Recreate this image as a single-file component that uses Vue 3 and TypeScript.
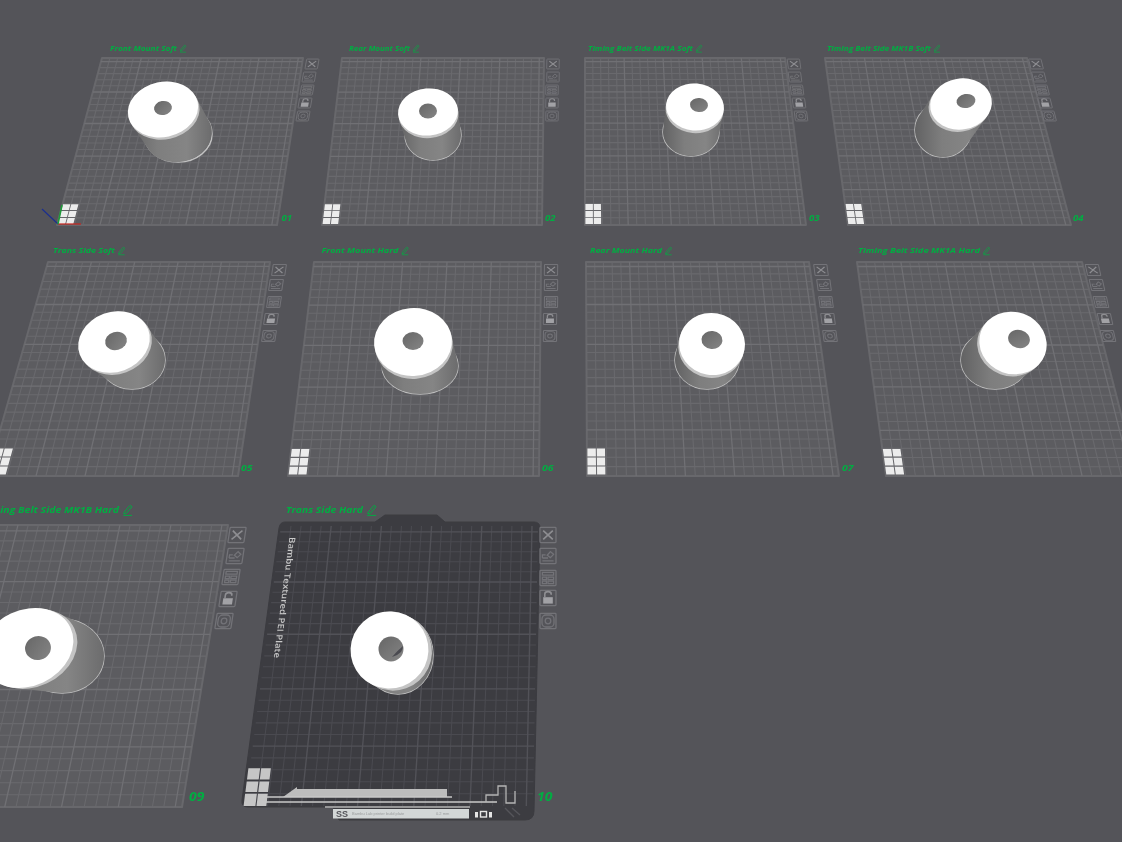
<script setup lang="ts">
type P = [number, number]
type E = [number, number, number, number, number]
interface PlateIn {
  q: [P, P, P, P]
  label: string
  lx: number
  lw: number
  ly: number
  fs: number
  num: string
  nx: number
  ny: number
  icons: P[]
  is: number
  isx: number
  t: E
  b: E
  h: E
  logo: boolean
  dark?: boolean
}

const plates: PlateIn[] = [
  { q: [[102, 58], [303, 58], [277, 225], [57, 225]], label: 'Front Mount Soft', lx: 110, lw: 67, ly: 50.5, fs: 6.6, num: '01', nx: 281.5, ny: 221, icons: [[312, 64], [309, 77], [307, 90], [305, 103], [303, 116]], is: 0.52, isx: 0.62, t: [163, 109.5, 35.5, 27.5, -12], b: [178, 134, 34, 28, -10], h: [163, 108, 9, 7, -10], logo: true },
  { q: [[342, 58], [544, 58], [542, 225], [322, 225]], label: 'Rear Mount Soft', lx: 349, lw: 61, ly: 50.5, fs: 6.6, num: '02', nx: 545, ny: 221, icons: [[553, 64], [553, 77], [552, 90], [552, 103], [552, 116]], is: 0.52, isx: 0.62, t: [428, 112, 30, 23.5, -5], b: [433, 135, 28, 25, 0], h: [428, 111, 9, 7.5, 0], logo: true },
  { q: [[585, 58], [785, 58], [806, 225], [585, 225]], label: 'Timing Belt Side MK1A Soft', lx: 588, lw: 105, ly: 50.5, fs: 6.6, num: '03', nx: 809, ny: 221, icons: [[794, 64], [795, 77], [797, 90], [799, 103], [801, 116]], is: 0.52, isx: 0.62, t: [695, 107, 29, 23.5, 5], b: [691, 132, 28, 24, 0], h: [699, 105, 9, 7, 5], logo: true },
  { q: [[825, 58], [1027, 58], [1071, 225], [848, 225]], label: 'Timing Belt Side MK1B Soft', lx: 827, lw: 104, ly: 50.5, fs: 6.6, num: '04', nx: 1073, ny: 221, icons: [[1036, 64], [1039, 77], [1042, 90], [1045, 103], [1049, 116]], is: 0.52, isx: 0.62, t: [961, 104, 31, 25.5, -10], b: [943, 130, 28, 27, 0], h: [966, 101, 9.5, 7, -10], logo: true },
  { q: [[48, 262], [270, 262], [238, 476], [-13, 476]], label: 'Trans Side Soft', lx: 53, lw: 62, ly: 253, fs: 7.2, num: '05', nx: 241, ny: 471, icons: [[279, 270], [276, 285], [274, 302], [271, 319], [269, 336]], is: 0.58, isx: 0.66, t: [114, 342, 36.5, 30, -20], b: [132, 360, 33, 29, 0], h: [116, 341, 11, 9, -15], logo: true },
  { q: [[314, 262], [541, 262], [539, 476], [288, 476]], label: 'Front Mount Hard', lx: 321.5, lw: 77, ly: 253, fs: 7.2, num: '06', nx: 542, ny: 471, icons: [[551, 270], [551, 285], [551, 302], [550, 319], [550, 336]], is: 0.58, isx: 0.66, t: [413, 342, 39, 34, -5], b: [420, 366, 38, 28, 0], h: [413, 341, 10.5, 9, 0], logo: true },
  { q: [[586, 262], [809, 262], [839, 476], [587, 476]], label: 'Rear Mount Hard', lx: 590, lw: 72, ly: 253, fs: 7.2, num: '07', nx: 842, ny: 471, icons: [[821, 270], [824, 285], [826, 302], [828, 319], [830, 336]], is: 0.58, isx: 0.66, t: [712, 344, 33, 31, 10], b: [707, 360, 32, 29, 0], h: [712, 340, 10.5, 9, 5], logo: true },
  { q: [[857, 262], [1082, 262], [1137, 476], [886, 476]], label: 'Timing Belt Side MK1A Hard', lx: 858, lw: 122, ly: 253, fs: 7.2, num: '', nx: 0, ny: 0, icons: [[1093, 270], [1097, 285], [1101, 302], [1105, 319], [1108, 336]], is: 0.58, isx: 0.66, t: [1013, 343, 34, 31, 20], b: [995, 360, 34, 29, 0], h: [1019, 339, 11, 9, 15], logo: true },
  { q: [[-33, 525], [228, 525], [182, 807], [-109, 807]], label: 'Timing Belt Side MK1B Hard', lx: -18, lw: 137, ly: 513, fs: 9.6, num: '09', nx: 189, ny: 801, icons: [[237, 535], [235, 556], [231, 577], [228, 599], [224, 621]], is: 0.8, isx: 0.8, t: [27, 648, 48, 38, -25], b: [62, 656, 42, 37, 0], h: [38, 648, 13, 12, -15], logo: true },
  { q: [[281, 526], [538, 526], [533, 806], [245, 806]], label: 'Trans Side Hard', lx: 286, lw: 77, ly: 513, fs: 9.6, num: '10', nx: 537, ny: 801, icons: [[548, 535], [548, 556], [548, 578], [548, 598], [548, 621]], is: 0.8, isx: 0.8, t: [389.5, 650, 39, 38.5, -20], b: [398, 655, 35, 39, 0], h: [391, 649, 12.5, 12.5, 0], logo: false, dark: true }
]

function homography(q: [P, P, P, P]) {
  const [[x0, y0], [x1, y1], [x2, y2], [x3, y3]] = q
  const dx1 = x1 - x2, dx2 = x3 - x2, sx = x0 - x1 + x2 - x3
  const dy1 = y1 - y2, dy2 = y3 - y2, sy = y0 - y1 + y2 - y3
  const den = dx1 * dy2 - dx2 * dy1
  const g = (sx * dy2 - dx2 * sy) / den
  const h = (dx1 * sy - sx * dy1) / den
  const a = x1 - x0 + g * x1, b = x3 - x0 + h * x3
  const d = y1 - y0 + g * y1, e = y3 - y0 + h * y3
  return (u: number, v: number): P => {
    const w = g * u + h * v + 1
    return [(a * u + b * v + x0) / w, (d * u + e * v + y0) / w]
  }
}

const fmt = (p: P) => `${p[0].toFixed(1)} ${p[1].toFixed(1)}`

function ellipsePts(e: E): P[] {
  const [cx, cy, rx, ry, rot] = e
  const r = (rot * Math.PI) / 180
  const pts: P[] = []
  for (let i = 0; i < 60; i++) {
    const a = (i / 60) * Math.PI * 2
    const x = rx * Math.cos(a), y = ry * Math.sin(a)
    pts.push([cx + x * Math.cos(r) - y * Math.sin(r), cy + x * Math.sin(r) + y * Math.cos(r)])
  }
  return pts
}

function hull(pts: P[]): P[] {
  const s = [...pts].sort((a, b) => a[0] - b[0] || a[1] - b[1])
  const cross = (o: P, a: P, b: P) => (a[0] - o[0]) * (b[1] - o[1]) - (a[1] - o[1]) * (b[0] - o[0])
  const lo: P[] = []
  for (const p of s) {
    while (lo.length > 1 && cross(lo[lo.length - 2], lo[lo.length - 1], p) <= 0) lo.pop()
    lo.push(p)
  }
  const up: P[] = []
  for (const p of [...s].reverse()) {
    while (up.length > 1 && cross(up[up.length - 2], up[up.length - 1], p) <= 0) up.pop()
    up.push(p)
  }
  return lo.slice(0, -1).concat(up.slice(0, -1))
}

const rotOf = (e: E) => `rotate(${e[4]} ${e[0]} ${e[1]})`

const view = plates.map((p, idx) => {
  const H = homography(p.q)
  let minor = ''
  let major = ''
  const step = 10 / 256
  for (let i = 1; i <= 25; i++) {
    const u = i * step
    const seg = `M${fmt(H(u, 0))}L${fmt(H(u, 1))}`
    if (i % 5 === 0) major += seg
    else minor += seg
    const v = 1 - i * step
    const seg2 = `M${fmt(H(0, v))}L${fmt(H(1, v))}`
    if (i % 5 === 0) major += seg2
    else minor += seg2
  }
  let logo = ''
  const cols: P[] = [[0.002, 0.036], [0.04, 0.073]]
  const rows: P[] = [[0.885, 0.918], [0.923, 0.956], [0.961, 0.994]]
  for (const c of cols)
    for (const r of rows)
      logo += `M${fmt(H(c[0], r[0]))}L${fmt(H(c[1], r[0]))}L${fmt(H(c[1], r[1]))}L${fmt(H(c[0], r[1]))}Z`
  const dx = p.b[0] - p.t[0], dy = p.b[1] - p.t[1]
  const len = Math.hypot(dx, dy) || 1
  const off = 3.2 * p.is * 1.6
  const rim: E = [p.t[0] + (dx / len) * off, p.t[1] + (dy / len) * off, p.t[2], p.t[3], p.t[4]]
  const body = hull([...ellipsePts(p.t), ...ellipsePts(p.b)]).map(fmt).join(' L')
  const skew = (p.icons[4][0] - p.icons[0][0]) / (p.icons[4][1] - p.icons[0][1])
  const icons = p.icons.map(([x, y]) => `matrix(${p.isx} 0 ${(skew * p.is).toFixed(3)} ${p.is} ${x} ${y})`)
  const outline = `M${p.q.map(fmt).join('L')}Z`
  const pencil = `translate(${p.lx + p.lw + p.fs * 0.55} ${p.ly}) scale(${p.fs / 10})`
  return { ...p, idx, minor, major, logoPath: logo, rim, bodyPath: `M${body}Z`, iconTf: icons, outline, pencil, numW: p.fs * 1.6 }
})

const darkOutline =
  'M285 522L375 522L385 515L437 515L445 522L534 522Q540 522 540 528L534 811Q534 820 525 820L339 820L333 807L248 807Q241 807 242 800L279 528Q280 522 285 522Z'
const plate10 = homography(plates[9].q)
let dl = ''
for (const c of [[-0.005, 0.036], [0.04, 0.074]])
  for (const r of [[0.878, 0.915], [0.921, 0.955], [0.961, 1.0]])
    dl += `M${fmt(plate10(c[0], r[0]))}L${fmt(plate10(c[1], r[0]))}L${fmt(plate10(c[1], r[1]))}L${fmt(plate10(c[0], r[1]))}Z`
const darkLogo = dl
</script>

<template>
  <div class="stage">
    <svg class="scene" width="1122" height="842" viewBox="0 0 1122 842" xmlns="http://www.w3.org/2000/svg">
      <defs>
        <linearGradient id="bodyGrad" x1="0" y1="0" x2="1" y2="0">
          <stop offset="0" stop-color="#626263" />
          <stop offset="0.35" stop-color="#7e7e7e" />
          <stop offset="0.7" stop-color="#858585" />
          <stop offset="1" stop-color="#6c6c6d" />
        </linearGradient>
        <linearGradient id="holeGrad" x1="0" y1="0" x2="1" y2="1">
          <stop offset="0" stop-color="#666666" />
          <stop offset="1" stop-color="#858585" />
        </linearGradient>
      </defs>

      <g v-for="p in view" :key="p.idx">
        <path v-if="p.dark" class="plate-dark" :d="darkOutline" />
        <path v-else class="plate" :d="p.outline" />
        <path :class="p.dark ? 'minor-dark' : 'minor'" :d="p.minor" />
        <path :class="p.dark ? 'major-dark' : 'major'" :d="p.major" />
        <path v-if="p.logo" class="logo" :d="p.logoPath" />

        <text class="label" :x="p.lx" :y="p.ly" :font-size="p.fs" :textLength="p.lw" lengthAdjust="spacingAndGlyphs">{{ p.label }}</text>
        <g :transform="p.pencil" class="pencil">
          <path d="M0 -1L6 -8L8 -6.500L2 0.500L-0.500 1Z" />
          <path d="M-1 2.500H8" />
        </g>
        <text v-if="p.num" class="num" :x="p.nx" :y="p.ny" :font-size="p.fs * 1.3" :textLength="p.numW" lengthAdjust="spacingAndGlyphs">{{ p.num }}</text>

        <g v-for="(tf, k) in p.iconTf" :key="k" :transform="tf" class="icon">
          <rect x="-10" y="-9.500" width="20" height="19" rx="1" />
          <template v-if="k === 0">
            <path class="icon-strong" d="M-6 -5.500L6 5.500M6 -5.500L-6 5.500" />
          </template>
          <template v-else-if="k === 1">
            <path d="M-7 6H7M-7 2.500V-1.500H-3M-7 2.500H0M-1 -1L3 -5.500L7 -2L3 2Z" />
          </template>
          <template v-else-if="k === 2">
            <path d="M-7 -7H7V-3.500H-7ZM-7 -1H-2V2H-7ZM-7 4H-2V7H-7ZM0 -1H7V2H0ZM0 4H7V7H0Z" />
          </template>
          <template v-else-if="k === 3">
            <path class="icon-fill" d="M-6 -1H6V7H-6Z" />
            <path class="icon-strong" d="M-4 -1V-5Q-4 -8 0 -8Q4 -8 4 -5V-4" />
          </template>
          <template v-else>
            <rect class="icon-soft" x="-7.500" y="-7.500" width="15" height="15" rx="5" />
            <circle r="3.500" />
          </template>
        </g>

        <path class="base-line" :d="`M${p.b[0] - p.b[2]} ${p.b[1]}a${p.b[2]} ${p.b[3]} 0 1 0 ${p.b[2] * 2} 0a${p.b[2]} ${p.b[3]} 0 1 0 ${-p.b[2] * 2} 0Z`" />
        <path class="body" :d="p.bodyPath" />
        <ellipse class="rim" :cx="p.rim[0]" :cy="p.rim[1]" :rx="p.rim[2]" :ry="p.rim[3]" :transform="rotOf(p.rim)" />
        <ellipse class="top" :cx="p.t[0]" :cy="p.t[1]" :rx="p.t[2]" :ry="p.t[3]" :transform="rotOf(p.t)" />
        <ellipse class="hole" :cx="p.h[0]" :cy="p.h[1]" :rx="p.h[2]" :ry="p.h[3]" :transform="rotOf(p.h)" />
      </g>

      <!-- plate 10 print details -->
      <path class="hole-shadow" d="M403 646Q398 650 392 657Q397 656 401 652Q403 649 403 646Z" />
      <text class="plate-name" transform="matrix(-0.13 1 -1 0 289.500 537)" font-size="8.500" textLength="121" lengthAdjust="spacingAndGlyphs">Bambu Textured PEI Plate</text>
      <path class="logo-dark" :d="darkLogo" />
      <path class="print-fill" d="M283 797L297 787L297 789L447 789L447 797Z" />
      <path class="print-line" d="M262 797H452M262 802H497" />
      <path class="print-thin" d="M486 802V795H498V786H506V803H515V791" />
      <path class="print-thin" d="M325 807H470" />
      <rect class="strip" x="333" y="809" width="136" height="9.500" />
      <text class="strip-big" x="336" y="817" font-size="9">SS</text>
      <text class="strip-small" x="352" y="815" font-size="4">Bambu Lab printer build plate</text>
      <text class="strip-small" x="436" y="815" font-size="4">0.2 mm</text>
      <rect class="strip-icon" x="475" y="812" width="3" height="5.500" />
      <rect class="strip-icon-o" x="480.500" y="811.500" width="6" height="5.500" />
      <rect class="strip-icon" x="489" y="812" width="3" height="5.500" />
      <path class="notch" d="M505 808L514 817M512 808L520 815" />

      <!-- axes of the 3D view -->
      <path class="axis-b" d="M58 224L42 209" />
      <path class="axis-r" d="M58 224L81 224" />
      <path class="axis-g" d="M58 224L62 205" />
    </svg>
  </div>
</template>

<style scoped>
.stage {
  width: 1122px;
  height: 842px;
  overflow: hidden;
  background: #545459;
}
.scene {
  display: block;
  filter: blur(0.45px);
}
.plate {
  fill: #5c5c60;
  stroke: #68686c;
  stroke-width: 2;
  stroke-linejoin: round;
}
.plate-dark {
  fill: #3c3c41;
  stroke: #3c3c41;
}
.minor {
  fill: none;
  stroke: #69696d;
  stroke-width: 1.1;
}
.major {
  fill: none;
  stroke: #707074;
  stroke-width: 1.3;
}
.minor-dark {
  fill: none;
  stroke: #4a4a50;
  stroke-width: 1.1;
}
.major-dark {
  fill: none;
  stroke: #525258;
  stroke-width: 1.4;
}
.logo {
  fill: #ececec;
}
.logo-dark {
  fill: #c6c6c6;
}
.label,
.num {
  font-family: 'Open Sans', 'Liberation Sans', sans-serif;
  font-weight: 700;
  font-style: italic;
  fill: #00ae42;
}
.pencil path {
  fill: none;
  stroke: #00ae42;
  stroke-width: 1;
}
.icon rect,
.icon path,
.icon circle {
  fill: none;
  stroke: #737378;
  stroke-width: 1.6;
}
.icon .icon-strong {
  stroke: #8e8e92;
  stroke-width: 2;
}
.icon .icon-fill {
  fill: #a2a2a6;
  stroke: none;
}
.base-line {
  fill: none;
  stroke: #c2c2c2;
  stroke-width: 1.5;
}
.body {
  fill: url(#bodyGrad);
}
.rim {
  fill: #c4c4c4;
}
.top {
  fill: #ffffff;
}
.hole {
  fill: url(#holeGrad);
}
.hole-shadow {
  fill: #4a4a50;
}
.plate-name {
  font-family: 'Open Sans', 'Liberation Sans', sans-serif;
  font-weight: 600;
  fill: #c9c9c9;
}
.print-fill {
  fill: #bdbdbd;
}
.print-line {
  fill: none;
  stroke: #c8c8c8;
  stroke-width: 1.4;
}
.print-thin {
  fill: none;
  stroke: #b4b4b4;
  stroke-width: 1.3;
}
.strip {
  fill: #d3d7d7;
}
.strip-big {
  font-family: 'Liberation Sans', sans-serif;
  font-weight: 700;
  fill: #55555a;
}
.strip-small {
  font-family: 'Liberation Sans', sans-serif;
  fill: #9a9c9d;
}
.strip-icon {
  fill: #e4e4e4;
}
.strip-icon-o {
  fill: none;
  stroke: #e4e4e4;
  stroke-width: 1.4;
}
.notch {
  fill: none;
  stroke: #55555a;
  stroke-width: 1.4;
}
.axis-b {
  stroke: #1b2f8f;
  stroke-width: 1.2;
}
.axis-r {
  stroke: #c8261e;
  stroke-width: 1.2;
}
.axis-g {
  stroke: #1f9a3a;
  stroke-width: 1.6;
}
</style>
